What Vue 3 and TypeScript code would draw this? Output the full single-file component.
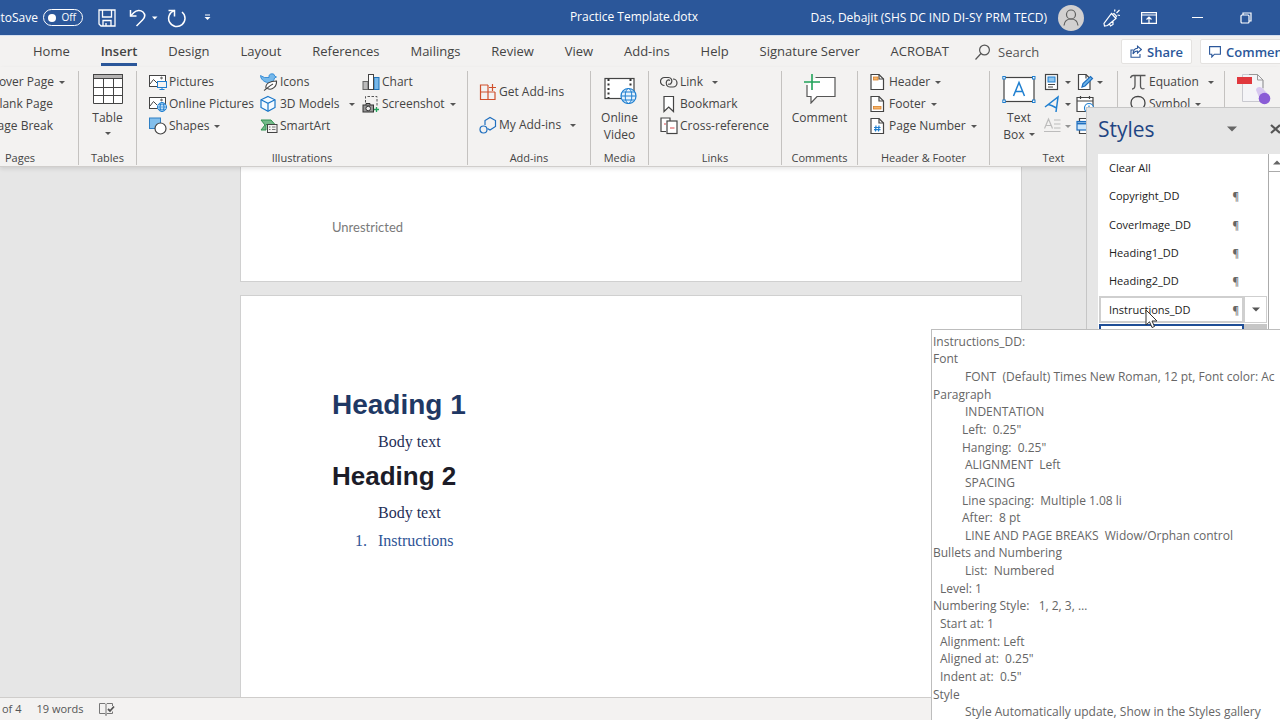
<script setup lang="ts">
import { ref } from 'vue'

const autoSave = ref(false)
const query = ref('')
const activeTab = ref('Insert')
const selectedStyle = ref('Instructions_DD')

const tabs: string[] = [
  'Home', 'Insert', 'Design', 'Layout', 'References', 'Mailings', 'Review',
  'View', 'Add-ins', 'Help', 'Signature Server', 'ACROBAT',
]

interface StyleEntry {
  name: string
  paragraph: boolean
}

const styleList: StyleEntry[] = [
  { name: 'Clear All', paragraph: false },
  { name: 'Copyright_DD', paragraph: true },
  { name: 'CoverImage_DD', paragraph: true },
  { name: 'Heading1_DD', paragraph: true },
  { name: 'Heading2_DD', paragraph: true },
  { name: 'Instructions_DD', paragraph: true },
]

interface TipLine {
  text: string
  level: 'flush' | 'nudge' | 'value' | 'deep'
}

const tipLines: TipLine[] = [
  { text: 'Instructions_DD:', level: 'flush' },
  { text: 'Font', level: 'flush' },
  { text: 'FONT  (Default) Times New Roman, 12 pt, Font color: Ac', level: 'deep' },
  { text: 'Paragraph', level: 'flush' },
  { text: 'INDENTATION', level: 'deep' },
  { text: 'Left:  0.25"', level: 'value' },
  { text: 'Hanging:  0.25"', level: 'value' },
  { text: 'ALIGNMENT  Left', level: 'deep' },
  { text: 'SPACING', level: 'deep' },
  { text: 'Line spacing:  Multiple 1.08 li', level: 'value' },
  { text: 'After:  8 pt', level: 'value' },
  { text: 'LINE AND PAGE BREAKS  Widow/Orphan control', level: 'deep' },
  { text: 'Bullets and Numbering', level: 'flush' },
  { text: 'List:  Numbered', level: 'deep' },
  { text: 'Level: 1', level: 'nudge' },
  { text: 'Numbering Style:   1, 2, 3, …', level: 'flush' },
  { text: 'Start at: 1', level: 'nudge' },
  { text: 'Alignment: Left', level: 'nudge' },
  { text: 'Aligned at:  0.25"', level: 'nudge' },
  { text: 'Indent at:  0.5"', level: 'nudge' },
  { text: 'Style', level: 'flush' },
  { text: 'Style Automatically update, Show in the Styles gallery', level: 'deep' },
]
</script>

<template>
  <div class="word">
    <header class="titlebar">
      <div class="quick">
        <label class="autosave">
          <span class="autosave-name">AutoSave</span>
          <span class="switch">
            <input v-model="autoSave" type="checkbox" class="knob" />
            <span>{{ autoSave ? 'On' : 'Off' }}</span>
          </span>
        </label>
        <button class="qbtn save" aria-label="Save">
          <svg width="18" height="18" viewBox="0 0 18 18" fill="none" stroke="#fff" stroke-width="1.3">
            <path d="M1 1H17V17H3L1 15Z" /><path d="M4.500 1V8H13.500V1M5 17V11.500H13V17M8 17V14" />
          </svg>
        </button>
        <button class="qbtn undo" aria-label="Undo">
          <svg width="18" height="18" viewBox="0 0 18 18" fill="none" stroke="#fff" stroke-width="1.5">
            <path d="M1.500 1V7H7.500" /><path d="M1.500 7L5 3.500C7.500 1 11.500 .8 14 3C16.500 5.500 16 8.500 13.500 11L7.500 17" />
          </svg>
          <svg width="6" height="4" viewBox="0 0 6 4"><path d="M0 .5H5.500L2.700 3.500Z" fill="#fff" /></svg>
        </button>
        <button class="qbtn redo" aria-label="Repeat">
          <svg width="20" height="20" viewBox="0 0 20 20" fill="none" stroke="#fff" stroke-width="1.5">
            <path d="M1.500 2.500H7.500V8.500" /><path d="M7.500 2.500A8.200 8.200 0 1 0 15 4" />
          </svg>
        </button>
        <button class="qbtn" aria-label="Customize Quick Access Toolbar">
          <svg width="7" height="7" viewBox="0 0 7 7"><path d="M1 1H6" stroke="#fff" /><path d="M.5 3H6.500L3.500 6Z" fill="#fff" /></svg>
        </button>
      </div>
      <h1 class="doc-title">Practice Template.dotx</h1>
      <div class="account">
        <span class="user">Das, Debajit (SHS DC IND DI-SY PRM TECD)</span>
        <button class="qbtn avatar" aria-label="Account">
          <svg width="26" height="26" viewBox="0 0 26 26" fill="none" stroke="#5f5f5f" stroke-width="1.2">
            <circle cx="13" cy="13" r="13" fill="#d2d0d0" stroke="none" />
            <circle cx="13" cy="9.500" r="4.500" /><path d="M6 20.500C6.500 16 9 14 13 14S19.500 16 20 20.500" />
          </svg>
        </button>
        <button class="qbtn tool" aria-label="Coming soon">
          <svg width="18" height="18" viewBox="0 0 18 18" fill="none" stroke="#fff" stroke-width="1.2">
            <path d="M8.500 4.500L13 9.500L4.500 16.500L1.500 17L1 14.500ZM9.500 5.500L11 4.500L13.500 7L12.500 9M6.500 15L7.500 17L10 15.500V12.500" /><path d="M11.500 2.500L12 .5M13.500 4L16.500 1M14.500 6L17 6.500" />
          </svg>
        </button>
        <button class="qbtn tool" aria-label="Ribbon Display Options">
          <svg width="16" height="12" viewBox="0 0 16 12" fill="none" stroke="#fff" stroke-width="1.2">
            <path d="M.6 .6H15.400V11.400H.6ZM.6 3H15.400M8 11V5M5.500 7.500L8 5L10.500 7.500" />
          </svg>
        </button>
        <button class="qbtn win" aria-label="Minimize">
          <svg width="11" height="11" viewBox="0 0 11 11"><path d="M0 5.500H11" stroke="#fff" /></svg>
        </button>
        <button class="qbtn win" aria-label="Restore Down">
          <svg width="12" height="12" viewBox="0 0 12 12" fill="none" stroke="#fff" stroke-width="1.2">
            <rect x="1" y="3" width="8" height="8" rx="1" /><path d="M3 3V1H11V9H9" />
          </svg>
        </button>
      </div>
    </header>

    <nav class="tabs">
      <div class="tab-list">
        <button
          v-for="tab in tabs"
          :key="tab"
          class="tab"
          :class="{ active: tab === activeTab }"
          @click="activeTab = tab"
        >{{ tab }}</button>
      </div>
      <label class="search">
        <svg width="16" height="16" viewBox="0 0 16 16" fill="none" stroke="#555" stroke-width="1.2">
          <circle cx="9.500" cy="6" r="4.900" /><path d="M6 9.500L.5 15.500" />
        </svg>
        <input v-model="query" type="text" placeholder="Search" aria-label="Search" />
      </label>
      <div class="tab-actions">
        <button class="pill">
          <svg width="12" height="13" viewBox="0 0 12 13" fill="none" stroke="#2b579a" stroke-width="1.1">
            <path d="M3.500 5H1V12.300H10V9" /><path d="M7.500 1.200L11.400 4.500L7.500 8V6C5.500 6 4 7 3 9C3 6 4.500 3.500 7.500 3.300Z" />
          </svg>
          Share
        </button>
        <button class="pill">
          <svg width="12" height="12" viewBox="0 0 12 12" fill="none" stroke="#2b579a" stroke-width="1.1">
            <path d="M.6 .6H11.400V8.200H5.500L2.800 11V8.200H.6Z" />
          </svg>
          Comments
        </button>
      </div>
    </nav>

    <section class="ribbon">
      <div class="group g-pages">
        <div class="cols">
          <div class="stack cut">
            <button class="cmd">Cover Page <i class="caret" /></button>
            <button class="cmd plain">Blank Page</button>
            <button class="cmd plain">Page Break</button>
          </div>
        </div>
        <h2>Pages</h2>
      </div>

      <div class="group g-tables">
        <button class="big">
          <svg width="30" height="30" viewBox="0 0 30 30" fill="none" stroke="#444" stroke-width="1">
            <rect x=".5" y=".5" width="29" height="29" fill="#fff" stroke="none" />
            <rect x=".5" y=".5" width="29" height="4" fill="#b5b3b2" /><path d="M.5 .5H29.500V29.500H.5ZM.5 13.500H29.500M.5 21.500H29.500M10.500 4.500V29.500M20.500 4.500V29.500" />
          </svg>
          <span>Table</span>
          <i class="caret" />
        </button>
        <h2>Tables</h2>
      </div>

      <div class="group g-illus">
        <div class="cols">
          <div class="stack s1">
            <button class="cmd">
              <svg width="18" height="16" viewBox="0 0 18 16" fill="none" stroke="#444">
                <rect x=".5" y="1.500" width="16" height="11" fill="#fff" /><path d="M1 10L4.500 5.500L8 9" /><circle cx="12.500" cy="4" r=".8" />
                <rect x="8.500" y="7.500" width="9" height="6" fill="#f3f2f1" stroke="#1f7fd0" /><path d="M13 13.500V15.500M10.500 15.500H15.500" stroke="#1f7fd0" />
              </svg>
              Pictures
            </button>
            <button class="cmd">
              <svg width="18" height="16" viewBox="0 0 18 16" fill="none" stroke="#444">
                <rect x=".5" y="1.500" width="16" height="11" fill="#fff" /><path d="M1 10L4.500 5.500L8 9" /><circle cx="12.500" cy="4" r=".8" />
                <circle cx="13" cy="11" r="4.500" fill="#dceffc" stroke="#1f7fd0" /><ellipse cx="13" cy="11" rx="2" ry="4.500" stroke="#1f7fd0" /><path d="M8.500 11H17.500M9.500 8.700H16.500M9.500 13.300H16.500" stroke="#1f7fd0" stroke-width=".8" />
              </svg>
              Online Pictures
            </button>
            <button class="cmd">
              <svg width="18" height="18" viewBox="0 0 18 18" fill="none">
                <rect x=".5" y="1" width="11" height="10.500" fill="#83bfec" stroke="#2e7fc4" /><circle cx="11.500" cy="11.500" r="5.500" fill="#fff" stroke="#444" stroke-width="1.200" />
              </svg>
              Shapes <i class="caret" />
            </button>
          </div>
          <div class="stack s2">
            <button class="cmd">
              <svg width="18" height="18" viewBox="0 0 18 18" fill="none">
                <path d="M.5 2.500L4.500 4.500L9 4.500C8.500 2 10 .8 12 .8C13.800 .8 14.500 1.500 14.500 3L16.500 4L14.500 5C14 8.500 11 10 7.500 9.500C4 9 .5 6 .5 2.500Z" fill="#76b8ea" stroke="#1f7fd0" stroke-width=".8" />
                <path d="M6 15.500C5 10.500 10 8 16.500 8C17 13.500 12 17.800 7.500 15.500M4 17.500C6.500 16 9 13 13 11" fill="#fff" stroke="#444" stroke-width="1.100" />
              </svg>
              Icons
            </button>
            <button class="cmd wide-caret">
              <svg width="18" height="18" viewBox="0 0 18 18" fill="none" stroke="#1a77c9" stroke-width="1.200">
                <path d="M8 1.500L15 4.800V12.500L8 16.300L1 12.500V4.800Z" fill="#f4faff" /><path d="M1 4.800L8 8.300L15 4.800M8 8.300V16" />
              </svg>
              3D Models <i class="caret" />
            </button>
            <button class="cmd">
              <svg width="18" height="16" viewBox="0 0 18 16" fill="none">
                <path d="M1 2H11L15 6.500H6V12H1L5 7Z" fill="#75b98a" stroke="#2f9350" /><rect x="7.500" y="6.500" width="9.500" height="8" fill="#f3f2f1" stroke="#444" /><path d="M9 9H10.500M12 9H15.500M9 11.500H10.500M12 11.500H15.500" stroke="#777" />
              </svg>
              SmartArt
            </button>
          </div>
          <div class="stack">
            <button class="cmd">
              <svg width="18" height="18" viewBox="0 0 18 18" fill="none">
                <rect x="1" y="8.500" width="5" height="8" fill="#bbb" stroke="#666" /><rect x="12" y="4.500" width="5" height="12" fill="#77b8ea" stroke="#1f72b8" /><rect x="6.500" y="1.500" width="5" height="15" fill="#fff" stroke="#444" />
              </svg>
              Chart
            </button>
            <button class="cmd">
              <svg width="18" height="18" viewBox="0 0 18 18" fill="none">
                <path d="M3.500 7.500V1.500H15V11" stroke="#555" stroke-dasharray="2.500 1.500" /><rect x="1" y="10" width="10.500" height="7" fill="#999" stroke="#333" /><path d="M4 10V8.500H8V10" stroke="#333" /><circle cx="6.200" cy="13.500" r="2.300" fill="#eee" stroke="#333" /><path d="M14.500 12V17M12 14.500H17" stroke="#21a35a" stroke-width="1.300" />
              </svg>
              Screenshot <i class="caret" />
            </button>
          </div>
        </div>
        <h2>Illustrations</h2>
      </div>

      <div class="group g-addins">
        <div class="cols">
          <div class="stack loose">
            <button class="cmd">
              <svg width="18" height="18" viewBox="0 0 18 18" fill="none" stroke="#d0502c" stroke-width="1.200">
                <path d="M9 2H1.500V16.500H16V9M1.500 9H16M9 2V16.500M13.500 1V8M10 4.500H17" />
              </svg>
              Get Add-ins
            </button>
            <button class="cmd wide-caret">
              <svg width="18" height="18" viewBox="0 0 18 18" fill="none" stroke="#1f6fbf" stroke-width="1.200">
                <path d="M6 9V4.500L11 1.500L16.500 4.500V10.500L11 14L8.500 12.500" /><circle cx="4.500" cy="13.500" r="3.500" />
              </svg>
              My Add-ins <i class="caret" />
            </button>
          </div>
        </div>
        <h2>Add-ins</h2>
      </div>

      <div class="group g-media">
        <button class="big">
          <svg width="34" height="30" viewBox="0 0 34 30" fill="none" stroke="#444">
            <rect x="2" y="4.500" width="29" height="20" fill="#fff" stroke-width="1.200" /><path d="M5.500 5V24M27.500 5V14" stroke="#333" stroke-width="2" stroke-dasharray="2 2.500" />
            <circle cx="25.500" cy="22" r="7.500" fill="#e6f3fd" stroke="#1f7fd0" stroke-width="1.200" /><ellipse cx="25.500" cy="22" rx="3.300" ry="7.500" stroke="#1f7fd0" /><path d="M18 22H33M19.500 18H31.500M19.500 26H31.500" stroke="#1f7fd0" />
          </svg>
          <span>Online</span>
          <span>Video</span>
        </button>
        <h2>Media</h2>
      </div>

      <div class="group g-links">
        <div class="cols">
          <div class="stack">
            <button class="cmd wide-caret">
              <svg width="18" height="14" viewBox="0 0 18 14" fill="none" stroke="#444" stroke-width="1.200">
                <path d="M4.500 10.500A4 4 0 0 1 4.500 2.500H8.500C11 2.500 12.500 5 11.500 7.500C11 9 9.500 9.500 8 9" /><path d="M13 4A4 4 0 0 1 13 12H10C7 12 5.500 9 6.500 6.500C7 5 8.500 4.500 10 5.500" />
              </svg>
              Link <i class="caret" />
            </button>
            <button class="cmd">
              <svg width="18" height="18" viewBox="0 0 18 18" fill="none" stroke="#444" stroke-width="1.200"><path d="M4 1.500H13.500V16.500L8.700 12L4 16.500Z" fill="#fff" /></svg>
              Bookmark
            </button>
            <button class="cmd">
              <svg width="18" height="18" viewBox="0 0 18 18" fill="none" stroke="#444">
                <path d="M6 14.500H1V1H10V4" fill="#fff" stroke-width="1.200" /><rect x="7" y="4" width="10" height="12.500" fill="#fff" stroke-width="1.200" /><path d="M4 7H6M10 11H14.500" stroke="#d8474b" />
              </svg>
              Cross-reference
            </button>
          </div>
        </div>
        <h2>Links</h2>
      </div>

      <div class="group g-comments">
        <button class="big">
          <svg width="34" height="30" viewBox="0 0 34 30" fill="none">
            <path d="M13 3.500H32V22.500H14L8 29V22.500H4V11Z" fill="#fff" /><path d="M12.500 3.500H32V22.500H14L8 29V22.500H4V11" stroke="#555" stroke-width="1.200" /><path d="M9 0V16M1 8H17" stroke="#21a35a" stroke-width="1.600" />
          </svg>
          <span>Comment</span>
        </button>
        <h2>Comments</h2>
      </div>

      <div class="group g-header">
        <div class="cols">
          <div class="stack">
            <button class="cmd">
              <svg width="18" height="18" viewBox="0 0 18 18" fill="none" stroke="#444" stroke-width="1.200"><path d="M2 1.500H10L14.500 6V16.500H2Z" fill="#fff" /><path d="M10 1.500V6H14.500" /><rect x="4.500" y="4" width="4.500" height="3" fill="#f5b56b" stroke="#d9812a" stroke-width=".8" /></svg>
              Header <i class="caret" />
            </button>
            <button class="cmd">
              <svg width="18" height="18" viewBox="0 0 18 18" fill="none" stroke="#444" stroke-width="1.200"><path d="M2 1.500H10L14.500 6V16.500H2Z" fill="#fff" /><path d="M10 1.500V6H14.500" /><rect x="4.500" y="11.500" width="7.500" height="2.500" fill="#f5b56b" stroke="#d9812a" stroke-width=".8" /></svg>
              Footer <i class="caret" />
            </button>
            <button class="cmd">
              <svg width="18" height="18" viewBox="0 0 18 18" fill="none" stroke="#444" stroke-width="1.200"><path d="M2 1.500H10L14.500 6V16.500H2Z" fill="#fff" /><path d="M10 1.500V6H14.500" /><path d="M7 8.500L6.500 14.500M10 8.500L9.500 14.500M5 10.500H11.500M5 12.700H11.500" stroke="#1f7fd0" /></svg>
              Page Number <i class="caret" />
            </button>
          </div>
        </div>
        <h2>Header &amp; Footer</h2>
      </div>

      <div class="group g-text">
        <div class="cols">
          <button class="big">
            <svg width="34" height="30" viewBox="0 0 34 30" fill="none">
              <rect x="2" y="3.500" width="30" height="24" fill="#fff" stroke="#444" stroke-width="1.200" /><path d="M11.500 22L17 8.500L22.500 22M13.500 17.500H20.500" stroke="#1f7fd0" stroke-width="1.500" />
              <g fill="#fff" stroke="#1f7fd0"><rect x=".8" y="2.500" width="2.500" height="2.500" /><rect x="30.500" y="2.500" width="2.500" height="2.500" /><rect x=".8" y="26" width="2.500" height="2.500" /><rect x="30.500" y="26" width="2.500" height="2.500" /></g>
            </svg>
            <span>Text</span>
            <span class="with-caret">Box <i class="caret" /></span>
          </button>
          <div class="stack icons">
            <button class="cmd" aria-label="Quick Parts">
              <svg width="18" height="18" viewBox="0 0 18 18" fill="none" stroke="#444"><rect x="1.500" y="1.500" width="12" height="15" fill="#fff" stroke-width="1.200" /><rect x="4" y="4" width="7" height="5" fill="#8ec5ee" stroke="#1f7fd0" /><path d="M4 11.500H11M4 14H9" /></svg>
              <i class="caret" />
            </button>
            <button class="cmd" aria-label="WordArt">
              <svg width="18" height="18" viewBox="0 0 18 18" fill="none" stroke="#1f7fd0" stroke-width="1.500"><path d="M1 12L14 2L12 17M4.500 9.500C7 10 10 11.500 12.500 13" /></svg>
              <i class="caret" />
            </button>
            <button class="cmd faded" aria-label="Drop Cap">
              <svg width="18" height="18" viewBox="0 0 18 18" fill="none" stroke="#999" stroke-width="1.200"><path d="M.5 11.500L4.500 2L8.500 11.500M2 8.500H7M10 3H16.500M10 7H16.500M10 11H16.500M0 14.500H16.500" /></svg>
              <i class="caret" />
            </button>
          </div>
          <div class="stack icons">
            <button class="cmd" aria-label="Signature Line">
              <svg width="18" height="18" viewBox="0 0 18 18" fill="none" stroke="#444" stroke-width="1.200"><path d="M2.500 1.500H10L14 5.500V16.500H2.500Z" fill="#fff" /><path d="M10 1.500V5.500" /><path d="M6 14L7 10.500L14.500 3.500L16.500 5.500L9 13Z" fill="#6fb5ea" stroke="#1f6fbf" /></svg>
              <i class="caret" />
            </button>
            <button class="cmd" aria-label="Date and Time">
              <svg width="18" height="18" viewBox="0 0 18 18" fill="none" stroke="#444" stroke-width="1.200"><path d="M1 2.500H17V16.500H1ZM1 6H17M4.500 1V4M13.500 1V4" fill="#fff" /><circle cx="13" cy="13" r="4.500" fill="#fff" stroke="#1f7fd0" /><path d="M13 10.500V13H15.500" stroke="#1f7fd0" /></svg>
            </button>
            <button class="cmd" aria-label="Object">
              <svg width="18" height="18" viewBox="0 0 18 18" fill="none" stroke="#444" stroke-width="1.200"><path d="M3.500 4V1.500H17V16.500H3.500V13" fill="#fff" /><rect x="1" y="4.500" width="12" height="8.500" fill="#cfe7fa" stroke="#1f6fbf" /><path d="M1 6.500H13" stroke="#1f6fbf" stroke-width="1.800" /></svg>
            </button>
          </div>
        </div>
        <h2>Text</h2>
      </div>

      <div class="group g-symbols">
        <div class="cols">
          <div class="stack">
            <button class="cmd wide-caret">
              <svg width="18" height="18" viewBox="0 0 18 18" fill="none" stroke="#555" stroke-width="1.300"><path d="M1.500 5C2 3 3 2.500 4.500 2.500H16.500M6 2.500V12C6 14.500 5 16 3 16M11.500 2.500V13C11.500 15.500 13 16.500 15.500 15.500" /></svg>
              Equation <i class="caret" />
            </button>
            <button class="cmd">
              <svg width="18" height="18" viewBox="0 0 18 18" fill="none" stroke="#444" stroke-width="1.300"><path d="M1.500 16.500H6V14.500C3.500 13 2 11 2 8C2 4 5 1.500 9 1.500S16 4 16 8C16 11 14.500 13 12 14.500V16.500H16.500" /></svg>
              Symbol <i class="caret" />
            </button>
          </div>
        </div>
        <h2>Symbols</h2>
      </div>

      <div class="group g-acrobat">
        <button class="big" aria-label="Create PDF">
          <svg width="34" height="32" viewBox="0 0 34 32">
            <path d="M5.500 .5H20.500L26 6V27.500H5.500Z" fill="#f4f4f7" stroke="#c9c9cf" /><path d="M12 .5H20.500L26 6V14M20.500 .5V6H26" fill="none" stroke="#999" />
            <rect x="0" y="3" width="15" height="7" fill="#e0383e" /><path d="M19 16C19 13 23 12 25 14L32 21L24 28Z" fill="#d7c7f0" /><circle cx="27.500" cy="24.500" r="5.800" fill="#8a5cd6" />
          </svg>
        </button>
      </div>
    </section>

    <main class="workspace">
      <div class="sheets">
        <article class="sheet first">
          <p class="unrestricted">Unrestricted</p>
        </article>
        <article class="sheet second">
          <h3 class="heading-one">Heading 1</h3>
          <p class="body-text">Body text</p>
          <h4 class="heading-two">Heading 2</h4>
          <p class="body-text">Body text</p>
          <ol class="instructions"><li><span class="num">1.</span><span>Instructions</span></li></ol>
        </article>
      </div>
    </main>

    <footer class="status">
      <span>of 4</span>
      <span>19 words</span>
      <button class="qbtn" aria-label="Proofing">
        <svg width="16" height="14" viewBox="0 0 16 14" fill="none" stroke="#777"><path d="M7 2.500L6 1.500H.5V11.500H6L7 12.500V2.500L8 1.500H13.500V4M13.500 9.500V11.500H8L7 12.500M7 12.500V14" /><path d="M9 7L11 9L15 4.500" stroke="#555" stroke-width="1.800" /></svg>
      </button>
    </footer>

    <aside class="pane">
      <div class="pane-head">
        <h2>Styles</h2>
        <button class="qbtn" aria-label="Task Pane Options"><svg width="10" height="6" viewBox="0 0 10 6"><path d="M0 .5H10L5 5.500Z" fill="#666" /></svg></button>
        <button class="qbtn" aria-label="Close"><svg width="11" height="10" viewBox="0 0 11 10"><path d="M1 1L10 9M10 1L1 9" stroke="#555" stroke-width="2.200" /></svg></button>
      </div>
      <div class="pane-body">
        <ul class="style-list">
          <li v-for="item in styleList" :key="item.name" :class="{ hot: item.name === selectedStyle }">
            <button class="style-name" @click="selectedStyle = item.name">
              <span>{{ item.name }}</span>
              <span v-if="item.paragraph" class="mark">¶</span>
            </button>
            <button v-if="item.name === selectedStyle" class="style-menu" aria-label="Style options">
              <svg width="8" height="5" viewBox="0 0 8 5"><path d="M0 .5H8L4 4.500Z" fill="#555" /></svg>
            </button>
          </li>
          <li class="current"><span class="current-name" /><span class="current-menu" /></li>
        </ul>
        <div class="scroll">
          <button class="qbtn" aria-label="Scroll up"><svg width="8" height="5" viewBox="0 0 8 5"><path d="M0 4.500H8L4 .5Z" fill="#666" /></svg></button>
        </div>
      </div>
    </aside>

    <div class="tip" role="tooltip">
      <p v-for="(line, i) in tipLines" :key="i" :class="line.level">{{ line.text }}</p>
    </div>

    <svg class="pointer" width="14" height="20" viewBox="0 0 14 20"><path d="M1 1V16L4.500 12.800L7 18.500L9.500 17.500L7 12H12Z" fill="#fff" stroke="#333" /></svg>
  </div>
</template>

<style>
html,
body,
#app {
  height: 100%;
}
body {
  overflow: hidden;
}
</style>

<style scoped>
.word {
  position: relative;
  display: flex;
  flex-direction: column;
  height: 100%;
  overflow: hidden;
  font-family: "Open Sans", "Noto Sans", sans-serif;
  font-size: 12px;
  line-height: 16px;
  color: #444;
  background: #f3f2f1;
}
h1, h2, h3, h4, p, ul, ol {
  margin: 0;
  padding: 0;
  font-weight: 400;
}
ul, ol {
  list-style: none;
}
button {
  font: inherit;
  color: inherit;
  background: none;
  border: 0;
  padding: 0;
  margin: 0;
  white-space: nowrap;
}
svg {
  display: block;
  flex: none;
}
.caret {
  flex: none;
  width: 0;
  height: 0;
  border: 3px solid transparent;
  border-top-color: #555;
  border-bottom-width: 0;
}

/* Title bar */
.titlebar {
  display: grid;
  grid-template-columns: 1fr auto 1fr;
  align-items: center;
  flex: none;
  height: 35px;
  background: #2b579a;
  border-bottom: 1px solid #d5dff0;
  color: #fff;
}
.quick,
.account {
  display: flex;
  align-items: center;
}
.quick .save { margin-left: 15px; }
.quick .undo { margin: 0 9px 0 13px; gap: 5px; }
.quick .redo { margin-right: 17px; }
.qbtn {
  display: flex;
  align-items: center;
  justify-content: center;
}
.autosave {
  display: flex;
  align-items: center;
  justify-content: flex-end;
  width: 83px;
  gap: 5px;
}
.autosave-name {
  flex: none;
}
.switch {
  display: flex;
  align-items: center;
  justify-content: space-between;
  flex: none;
  width: 40px;
  height: 17px;
  padding: 0 6px 0 4px;
  border: 1px solid #fff;
  border-radius: 9px;
  box-sizing: border-box;
  font-size: 10px;
  line-height: 15px;
}
.knob {
  appearance: none;
  width: 8px;
  height: 8px;
  margin: 0;
  border-radius: 50%;
  background: #fff;
}
.doc-title {
  font-size: 12px;
  padding: 0 12px 2px 0;
}
.account {
  justify-content: flex-end;
}
.avatar { margin: 0 19px 0 11px; }
.tool { margin-right: 20px; }
.tool + .win { margin-left: 15px; }
.win { margin-right: 28px; }
.win + .win { margin: 0 28px 0 9px; }

/* Tabs */
.tabs {
  display: flex;
  align-items: center;
  flex: none;
  height: 31px;
  padding-left: 33px;
  font-size: 13px;
}
.tab-list {
  display: flex;
  justify-content: space-between;
  flex: none;
  width: 916px;
  margin-right: 26px;
}
.tab {
  height: 29px;
  line-height: 28px;
  border-bottom: 3px solid transparent;
  box-sizing: border-box;
}
.tab.active {
  font-weight: 600;
  border-bottom-color: #2b579a;
}
.search {
  display: flex;
  align-items: center;
  gap: 7px;
}
.search input {
  width: 60px;
  border: 0;
  padding: 0;
  outline: 0;
  background: none;
  font: inherit;
  color: #444;
}
.search input::placeholder {
  color: #555;
  opacity: 1;
}
.tab-actions {
  display: flex;
  flex: none;
  gap: 8px;
  margin-left: auto;
  width: 159px;
}
.pill {
  display: flex;
  align-items: center;
  flex: none;
  gap: 5px;
  height: 25px;
  padding: 0 8px;
  border: 1px solid #e4e2e0;
  border-radius: 2px;
  background: #fff;
  color: #2b579a;
  font-weight: 600;
  box-sizing: border-box;
}

/* Ribbon */
.ribbon {
  display: flex;
  flex: none;
  height: 100px;
  padding-top: 4px;
  border-bottom: 1px solid #d0cecc;
  box-sizing: border-box;
  overflow: hidden;
  z-index: 1;
  box-shadow: 0 2px 4px rgba(0, 0, 0, 0.1);
}
.group {
  display: flex;
  flex-direction: column;
  justify-content: space-between;
  flex: none;
  height: 94px;
  border-right: 1px solid #c4c2c0;
  box-sizing: border-box;
}
.group h2 {
  font-size: 11px;
  line-height: 14px;
  text-align: center;
}
.cols {
  display: flex;
}
.stack {
  display: flex;
  flex-direction: column;
}
.cmd {
  display: flex;
  align-items: center;
  height: 22px;
  gap: 2px;
}
.cmd .caret {
  margin-left: 3px;
}
.wide-caret .caret {
  margin-left: 7px;
}
.big {
  display: flex;
  flex-direction: column;
  align-items: center;
  line-height: 17px;
}
.big svg {
  margin: 3px 0 5px;
}
.big > .caret {
  margin-top: 6px;
}
.with-caret {
  display: flex;
  align-items: center;
  gap: 4px;
}
.g-pages { width: 79px; }
.g-pages h2 { padding-right: 38px; }
.cut { width: 65px; align-items: flex-end; }
.cut .plain { padding-right: 12px; }
.g-tables { width: 58px; }
.g-illus { width: 331px; }
.g-illus .cols { padding-left: 12px; }
.s1 { width: 111px; }
.s2 { width: 102px; }
.g-addins { width: 123px; }
.g-addins .cols { padding: 10px 0 0 11px; }
.loose { gap: 11px; }
.g-media { width: 58px; }
.g-links { width: 133px; }
.g-links .cols { padding-left: 11px; }
.g-comments { width: 76px; }
.g-header { width: 132px; }
.g-header .cols { padding-left: 11px; }
.g-text { width: 128px; }
.g-text .cols { padding-left: 12px; }
.icons { padding-left: 8px; }
.icons + .icons { padding-left: 5px; }
.icons .caret { margin-left: 1px; }
.faded { opacity: 0.6; }
.g-symbols { width: 107px; }
.g-symbols .cols { padding-left: 11px; }
.g-acrobat { width: 58px; border-right: 0; }

/* Document */
.workspace {
  flex: 1;
  min-height: 0;
  padding-right: 18px;
  overflow: hidden;
  background: #e6e6e6;
}
.sheets {
  display: flex;
  flex-direction: column;
  gap: 13px;
  height: 100%;
  max-width: 782px;
  margin: 0 auto;
}
.sheet {
  flex: none;
  padding: 0 91px;
  border: 1px solid #d0d0d0;
  box-sizing: border-box;
  background: #fff;
}
.first {
  height: 115px;
  border-top: 0;
}
.second {
  flex: 1;
  border-bottom: 0;
  padding-top: 93px;
}
.unrestricted {
  padding-top: 52px;
  font-family: Lato, sans-serif;
  font-size: 13px;
  color: #7a7a7a;
}
.heading-one,
.heading-two {
  font-family: "Liberation Sans", Arial, sans-serif;
  font-weight: 700;
  line-height: 32px;
}
.heading-one {
  font-size: 28px;
  color: #1f3864;
}
.heading-two {
  font-size: 26px;
  color: #1c1c28;
}
.body-text,
.instructions {
  font-family: "Liberation Serif", "Times New Roman", serif;
  font-size: 16px;
  line-height: 20px;
}
.body-text {
  padding: 11px 0 8px 46px;
  color: #1f2f57;
}
.instructions {
  color: #2f5496;
}
.instructions li {
  display: flex;
  padding-left: 23px;
}
.num {
  width: 23px;
}

/* Status bar */
.status {
  display: flex;
  align-items: center;
  flex: none;
  height: 23px;
  gap: 15px;
  padding-left: 2px;
  border-top: 1px solid #cfcdcb;
  box-sizing: border-box;
  font-size: 11px;
  color: #555;
}

/* Styles pane, floating over the ribbon */
.pane {
  position: absolute;
  top: 107px;
  right: 0;
  display: flex;
  flex-direction: column;
  width: 194px;
  height: 246px;
  padding-left: 11px;
  border: 1px solid #c6c6c6;
  border-right: 0;
  box-sizing: border-box;
  overflow: hidden;
  background: #e6e6e6;
  z-index: 2;
}
.pane-head {
  display: flex;
  align-items: center;
  flex: none;
  height: 42px;
  margin-bottom: 4px;
  gap: 33px;
}
.pane-head h2 {
  flex: 1;
  font-size: 21px;
  line-height: 30px;
  color: #1f4583;
}
.pane-head .qbtn:last-child {
  margin-right: -1px;
}
.pane-body {
  display: flex;
  flex: 1;
  color: #222;
}
.style-list {
  display: grid;
  grid-template-rows: repeat(7, 1fr);
  flex: 1;
  height: 198px;
  background: #fff;
  font-size: 11px;
}
.style-list li {
  display: flex;
  margin: 0 1px;
}
.style-name {
  display: flex;
  align-items: center;
  justify-content: space-between;
  width: 145px;
  padding: 0 5px 0 10px;
  box-sizing: border-box;
}
.mark {
  font-size: 10px;
  font-weight: 600;
  color: #666;
}
.hot {
  padding: 1px 0;
}
.hot .style-name,
.hot .style-menu {
  border: 2px solid #cfcfcf;
}
.hot .style-name {
  padding: 0 3px 0 8px;
}
.hot .style-menu {
  display: flex;
  align-items: center;
  justify-content: center;
  flex: 1;
  border-width: 1px;
}
.current-name {
  width: 145px;
  border: 2px solid #1f4e96;
  box-sizing: border-box;
  background: #fff;
}
.current-menu {
  flex: 1;
  background: #c6c6c6;
}
.scroll {
  width: 11px;
  border-left: 1px solid #ababab;
  background: #fff;
}
.scroll .qbtn {
  width: 16px;
  height: 18px;
  border-bottom: 1px solid #ababab;
}

/* Style description tooltip */
.tip {
  position: absolute;
  top: 329px;
  right: 0;
  bottom: -1px;
  display: grid;
  grid-auto-rows: 1fr;
  align-items: center;
  width: 349px;
  padding: 3px 0 0 1px;
  border: 1px solid #bdbdbd;
  border-width: 1px 0 0 1px;
  box-sizing: border-box;
  overflow: hidden;
  background: #fff;
  color: #666;
  font-size: 12px;
  z-index: 3;
}
.tip p {
  white-space: pre;
}
.nudge { padding-left: 7px; }
.value { padding-left: 29px; }
.deep { padding-left: 32px; }

.pointer {
  position: absolute;
  top: 309px;
  right: 121px;
  z-index: 4;
}
</style>
